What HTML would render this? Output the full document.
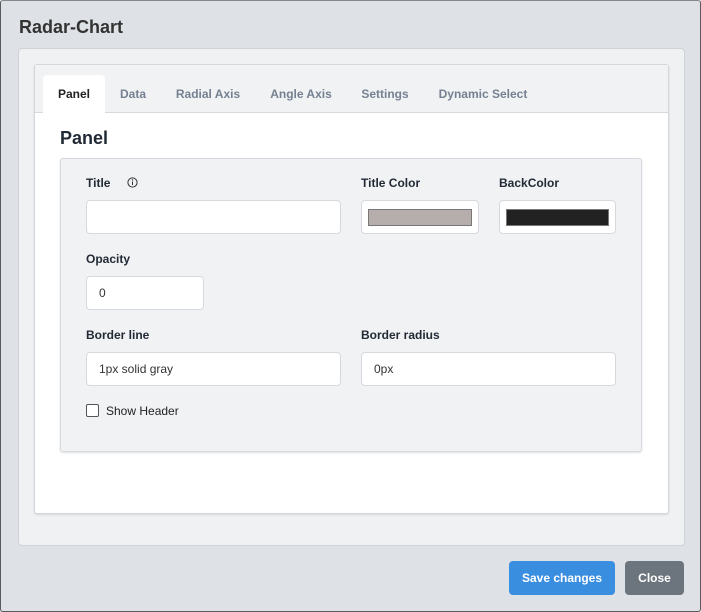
<!DOCTYPE html>
<html><head><style>
*{box-sizing:border-box;margin:0;padding:0}
body{width:701px;height:612px;overflow:hidden;font-family:"Liberation Sans",Arial,sans-serif;background:#dee1e5;position:relative}
.frame{position:absolute;left:0;top:0;width:701px;height:612px;border:1px solid #5a5a5a;border-top-color:#888;border-radius:3px}
.a{position:absolute}
.h1{left:19px;top:17px;font-size:18px;font-weight:bold;color:#333}
.outer{left:18px;top:48px;width:667px;height:498px;background:#f0f1f3;border:1px solid #cfd2d6;border-radius:4px}
.card{left:34px;top:64px;width:635px;height:450px;background:#fff;border:1px solid #d3d6da;border-radius:3px;box-shadow:0 1px 2px rgba(0,0,0,.1)}
.tabbar{left:35px;top:65px;width:633px;height:48px;background:#f1f2f4;border-bottom:1px solid #d6d9dd}
.tab{top:75px;height:39px;font-size:12px;font-weight:bold;color:#758191;line-height:38px;text-align:center}
.tab.act{background:#fff;color:#222;border-radius:4px 4px 0 0}
.h2{left:60px;top:128px;font-size:18px;font-weight:bold;color:#222a35}
.sec{left:60px;top:158px;width:582px;height:294px;background:#f1f2f4;border:1px solid #d6d9dd;border-radius:3px;box-shadow:0 1px 2px rgba(0,0,0,.12)}
.lbl{font-size:12px;font-weight:bold;color:#222a35}
.inp{background:#fff;border:1px solid #d6d9dd;border-radius:4px;height:34px;font-size:12px;color:#333;padding-left:12px;line-height:32px}
.sw{position:absolute;left:6px;top:8px;right:6px;bottom:7px;border:1px solid #777}
.btn{top:561px;height:34px;border-radius:4px;color:#fff;font-size:12px;font-weight:bold;line-height:34px;text-align:center}
</style></head><body>
<div class="frame"></div>
<div class="a h1">Radar-Chart</div>
<div class="a outer"></div>
<div class="a card"></div>
<div class="a tabbar"></div>
<div class="a tab act" style="left:43px;width:62px">Panel</div>
<div class="a tab" style="left:113px;width:40px">Data</div>
<div class="a tab" style="left:168px;width:80px">Radial Axis</div>
<div class="a tab" style="left:262px;width:78px">Angle Axis</div>
<div class="a tab" style="left:355px;width:60px">Settings</div>
<div class="a tab" style="left:432px;width:102px">Dynamic Select</div>
<div class="a h2">Panel</div>
<div class="a sec"></div>
<div class="a lbl" style="left:86px;top:176px">Title</div>
<svg class="a" style="left:127px;top:177px" width="11" height="11" viewBox="0 0 11 11"><circle cx="5.5" cy="5.5" r="4.6" fill="none" stroke="#333" stroke-width="1"/><line x1="5.5" y1="4.5" x2="5.5" y2="8" stroke="#333"/><circle cx="5.5" cy="3" r=".7" fill="#333"/></svg>
<div class="a lbl" style="left:361px;top:176px">Title Color</div>
<div class="a lbl" style="left:499px;top:176px">BackColor</div>
<div class="a inp" style="left:86px;top:200px;width:255px"></div>
<div class="a inp" style="left:361px;top:200px;width:118px"><div class="sw" style="background:#b5aeac"></div></div>
<div class="a inp" style="left:499px;top:200px;width:117px"><div class="sw" style="background:#222"></div></div>
<div class="a lbl" style="left:86px;top:252px">Opacity</div>
<div class="a inp" style="left:86px;top:276px;width:118px">0</div>
<div class="a lbl" style="left:86px;top:328px">Border line</div>
<div class="a lbl" style="left:361px;top:328px">Border radius</div>
<div class="a inp" style="left:86px;top:352px;width:255px">1px solid gray</div>
<div class="a inp" style="left:361px;top:352px;width:255px">0px</div>
<div class="a" style="left:86px;top:404px;width:13px;height:13px;border:1px solid #555;border-radius:2px;background:#fff"></div>
<div class="a" style="left:106px;top:404px;font-size:12px;color:#222">Show Header</div>
<div class="a btn" style="left:509px;width:106px;background:#3a8ee0">Save changes</div>
<div class="a btn" style="left:625px;width:59px;background:#6c757d">Close</div>
</body></html>
